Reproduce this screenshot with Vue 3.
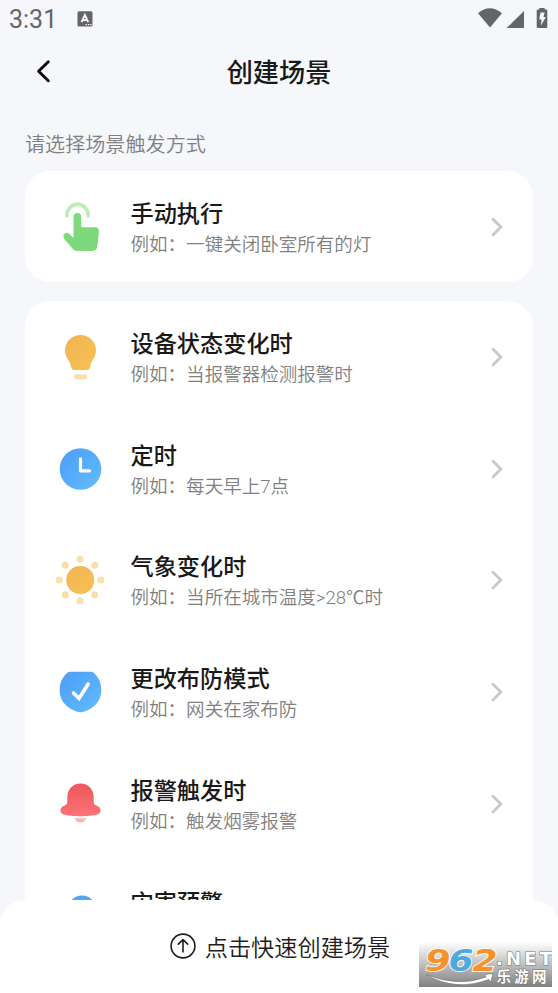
<script setup>
const groups = [
  [{ icon: 'tap', title: '手动执行', hint: '例如：一键关闭卧室所有的灯' }],
  [
    { icon: 'bulb', title: '设备状态变化时', hint: '例如：当报警器检测报警时' },
    { icon: 'clock', title: '定时', hint: '例如：每天早上7点' },
    { icon: 'sun', title: '气象变化时', hint: '例如：当所在城市温度>28℃时' },
    { icon: 'shield', title: '更改布防模式', hint: '例如：网关在家布防' },
    { icon: 'bell', title: '报警触发时', hint: '例如：触发烟雾报警' },
    { icon: 'disaster', title: '灾害预警', hint: '' },
  ],
]
const rays = [[30, 9.3], [44.7, 15.3], [50.7, 30], [44.7, 44.7], [30, 50.7], [15.3, 44.7], [9.3, 30], [15.3, 15.3]]
</script>

<template>
  <div class="screen">
    <svg class="defs" width="0" height="0">
      <defs>
        <linearGradient id="blue" x1="0" y1="0" x2="1" y2="1">
          <stop offset="0" stop-color="#4c9df6" /><stop offset="1" stop-color="#62bcfd" />
        </linearGradient>
        <linearGradient id="amber" x1="0" y1="0" x2="1" y2="1">
          <stop offset="0" stop-color="#f0b554" /><stop offset="1" stop-color="#fac052" />
        </linearGradient>
        <linearGradient id="red" x1="0" y1="0" x2="0" y2="1">
          <stop offset="0" stop-color="#ee575b" /><stop offset="1" stop-color="#fc7377" />
        </linearGradient>
      </defs>
    </svg>

    <div class="status">
      <span class="time">3:31</span>
      <svg class="badge" width="16" height="16" viewBox="0 0 16 16">
        <rect x=".5" y=".2" width="15" height="15.3" rx="1.6" fill="#646567" />
        <path d="M4.600 11.200 7.900 4l3.300 7.200M5.800 9.100h4.200" fill="none" stroke="#fff" stroke-width="1.800" />
        <path d="M8.500 13.600h1.300M10.900 13.600h1.300M13.200 13.600h1.300" stroke="#fff" stroke-width="1.300" />
      </svg>
      <svg class="signals" width="72" height="22" viewBox="0 0 72 22">
        <g fill="#646567">
          <path d="M1 6.200Q12.700-3.700 25 6.200L13 20.500Z" />
          <path d="M47 4v17H29.600Z" />
          <path d="M62.300 1h5.400v1.500h1.600q1 0 1 1v16.300q0 1.200-1.200 1.200h-8.200q-1.200 0-1.200-1.200V3.500q0-1 1-1h1.600Z" />
        </g>
        <path d="M63.500 5.500h4.200l-1.300 4.500h2.400l-4.800 8.500.5-6h-2.200Z" fill="#f5f7fb" />
      </svg>
    </div>

    <header class="header">
      <svg class="back" width="18" height="26" viewBox="0 0 18 26">
        <path d="M14.300 3.700 4.600 13.200l9.700 9.500" fill="none" stroke="#080808" stroke-width="2.900" stroke-linecap="round" stroke-linejoin="round" />
      </svg>
      <h1>创建场景</h1>
    </header>

    <main class="content">
      <p class="prompt">请选择场景触发方式</p>
      <section v-for="(group, g) in groups" :key="g" class="card">
        <div v-for="item in group" :key="item.title" class="row">
          <svg class="icon" width="60" height="60" viewBox="0 0 60 60">
            <g v-if="item.icon === 'tap'">
              <path d="M16.800 18.700a10.700 11.500 0 1 1 21.400 0" fill="none" stroke="#bdecba" stroke-width="3.700" stroke-linecap="round" />
              <path d="M23.600 19.700a3.800 3.800 0 0 1 7.600 0v10.600h13.500q4.700 0 4.200 4.500l-1.500 14.500q-.5 4.600-5 4.600H27q-2.600 0-4.200-2l-8.500-10q-1.700-3-.2-4.800 2.700-2.500 5.200-.4l4.300 4.200Z" fill="#7dd97c" />
            </g>
            <g v-else-if="item.icon === 'bulb'">
              <path d="M30.500 8a15.500 15.500 0 0 1 15.500 15.600c0 5.700-3.200 8.600-4.900 12.600-1.200 2.800-.7 6.800-3.700 6.800H24c-3 0-2.800-4.200-4-6.800-1.800-4-5-6.900-5-12.600A15.500 15.500 0 0 1 30.500 8Z" fill="url(#amber)" />
              <rect x="24" y="47.300" width="13.200" height="4.800" rx="2" fill="#fbdfa9" />
            </g>
            <g v-else-if="item.icon === 'clock'">
              <circle cx="30.500" cy="30" r="20.800" fill="url(#blue)" />
              <path d="M30.500 19.800v12h9" fill="none" stroke="#fff" stroke-width="3.200" stroke-linecap="round" stroke-linejoin="round" />
            </g>
            <g v-else-if="item.icon === 'sun'">
              <circle cx="30.300" cy="30" r="14" fill="url(#amber)" />
              <circle v-for="([x, y], i) in rays" :key="i" :cx="x" :cy="y" r="3.500" fill="#fbdfa9" />
            </g>
            <g v-else-if="item.icon === 'shield'" transform="translate(0 -1.500)">
              <path d="M17.300 12.200Q18.600 11.200 20.500 11.200h20q1.900 0 3.200 1C48.500 16.500 51.300 22 51.300 29.500c0 8.500-3.800 14.500-11.300 19-3.300 2-6.300 3.200-9.500 3.200s-6.200-1.200-9.500-3.200C13.500 44 9.700 38 9.700 29.500c0-7.500 2.800-13 7.600-17.300Z" fill="url(#blue)" />
              <path d="m23.500 32.500 5.500 5.500 9.200-14.500" fill="none" stroke="#fff" stroke-width="3.600" stroke-linecap="round" stroke-linejoin="miter" />
            </g>
            <g v-else-if="item.icon === 'bell'">
              <path d="M30.500 9.600c8 0 13.200 6.300 13.200 13.800v4c0 2.600.8 3.300 3.100 4.300s3.700 2.300 3.700 4.700c0 3.600-3.500 4.300-6.500 4.800q-13.500 2-27 0c-3-.5-6.500-1.200-6.500-4.800 0-2.400 1.400-3.700 3.700-4.700s3.100-1.700 3.100-4.300v-4C17.300 15.900 22.500 9.600 30.500 9.600Z" fill="url(#red)" />
              <path d="M25 44q5.500.5 11 0-1 4.600-5.500 4.600T25 44Z" fill="#fbb5b7" />
            </g>
            <circle v-else cx="32" cy="23.500" r="14" fill="#52a6f5" />
          </svg>
          <div class="text">
            <h2>{{ item.title }}</h2>
            <p>{{ item.hint }}</p>
          </div>
          <svg class="chevron" width="16" height="24" viewBox="0 0 16 24">
            <path d="m4 4.200 7.900 7.900L4 20" fill="none" stroke="#c8c8c8" stroke-width="2.800" stroke-linecap="round" stroke-linejoin="miter" />
          </svg>
        </div>
      </section>
    </main>

    <footer class="footer">
      <svg width="26" height="26" viewBox="0 0 26 26" fill="none" stroke="#1d1d1d" stroke-width="1.600" stroke-linecap="round" stroke-linejoin="round">
        <circle cx="13" cy="13" r="11.900" />
        <path d="M13 19V7M8.300 11.200 13 6.700l4.700 4.500" />
      </svg>
      <span>点击快速创建场景</span>
    </footer>

    <svg class="watermark" width="133" height="45" viewBox="0 0 133 45">
      <defs>
        <linearGradient id="shade" x1="0" y1="0" x2="0" y2="1">
          <stop offset="0" stop-color="#fff" /><stop offset=".45" stop-color="#c5c5c5" /><stop offset="1" stop-color="#808080" />
        </linearGradient>
      </defs>
      <rect width="133" height="45" fill="url(#shade)" />
      <path d="M7 32.500q33 13 60 2.500l-1.500-2.500 8.500-1-2.200 8.500-2-2.500Q36 50 7 32.500Z" fill="#fff" stroke="#777" stroke-width=".7" />
      <g class="digits" stroke="#fff" stroke-width="1.600">
        <text x="6" y="28.500" textLength="25.500" lengthAdjust="spacingAndGlyphs" fill="#f7922b">9</text>
        <text x="29.500" y="28.500" textLength="25" lengthAdjust="spacingAndGlyphs" fill="#4fa9dc">6</text>
        <text x="53.500" y="28.500" textLength="25" lengthAdjust="spacingAndGlyphs" fill="#f7922b">2</text>
      </g>
      <text class="net" x="77" y="22.500" textLength="56">.NET</text>
      <text class="site" x="77.500" y="39.500" textLength="50">乐游网</text>
    </svg>
  </div>
</template>

<style>
body { background: #f5f7fb; }
</style>

<style scoped>
.screen {
  position: relative;
  display: flex;
  flex-direction: column;
  width: 558px;
  height: 993px;
  overflow: hidden;
  background: #f5f7fb;
  font-family: "Noto Sans CJK SC", sans-serif;
}
.defs { position: absolute; }
h1, h2, p { margin: 0; }
.status {
  display: flex;
  align-items: center;
  height: 38px;
  flex: none;
  padding: 0 9px;
}
.time {
  width: 68px;
  padding-top: 2px;
  font: 400 25px/38px Roboto, sans-serif;
  color: #646567;
}
.signals { margin-left: auto; margin-bottom: 3px; }
.header {
  display: grid;
  grid-template-columns: 60px 1fr 60px;
  align-items: center;
  height: 66px;
  flex: none;
}
.back { margin-left: 34px; }
.header h1 {
  text-align: center;
  font-size: 26.200px;
  font-weight: 500;
  line-height: 38px;
  color: #191919;
}
.content {
  flex: 1;
  min-height: 0;
  overflow: hidden;
  padding: 26px 25px 0;
}
.prompt {
  height: 40.700px;
  font-size: 20.100px;
  font-weight: 350;
  line-height: 28px;
  color: #808080;
}
.card {
  margin-bottom: 18.500px;
  border-radius: 25px;
  background: #fff;
}
.row {
  display: flex;
  align-items: center;
  height: 111.750px;
  padding: 0 28px 0 25px;
}
.icon { flex: none; }
.text { flex: 1; padding: 2px 0 0 20.500px; }
.text h2 {
  font-size: 23.200px;
  font-weight: 500;
  line-height: 32px;
  color: #191919;
}
.text p {
  min-height: 30px;
  margin-top: 2px;
  font-family: Roboto, "Noto Sans CJK SC", sans-serif;
  font-size: 18.550px;
  font-weight: 350;
  line-height: 30px;
  color: #808080;
}
.footer {
  display: flex;
  justify-content: center;
  align-items: center;
  gap: 9px;
  height: 93px;
  flex: none;
  box-sizing: border-box;
  padding: 0 0 1px 2px;
  border-radius: 25px 25px 0 0;
  background: #fff;
  font-size: 23.200px;
  font-weight: 350;
  line-height: 34px;
  color: #1d1d1d;
}
.watermark {
  position: absolute;
  left: 419px;
  top: 942px;
}
.digits {
  font: italic 700 31px "DejaVu Sans", sans-serif;
  paint-order: stroke;
}
.net, .site {
  fill: #fff;
  stroke: #777;
  stroke-width: 1.200px;
  paint-order: stroke;
}
.net { font: 700 18px "DejaVu Sans", sans-serif; }
.site { font: 700 14.500px "Noto Sans CJK SC", sans-serif; }
</style>
